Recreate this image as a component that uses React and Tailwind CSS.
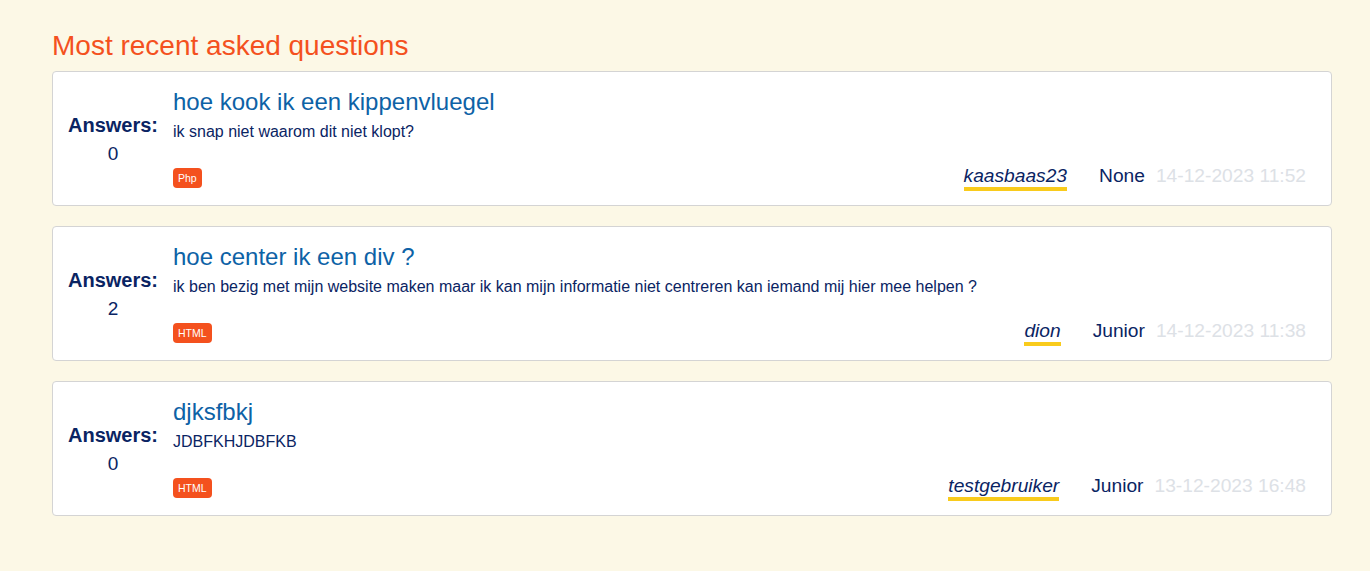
import React from 'react';

const questions = [
  {
    answers: 0,
    title: 'hoe kook ik een kippenvluegel',
    body: 'ik snap niet waarom dit niet klopt?',
    tag: 'Php',
    user: 'kaasbaas23',
    rank: 'None',
    date: '14-12-2023 11:52',
  },
  {
    answers: 2,
    title: 'hoe center ik een div ?',
    body: 'ik ben bezig met mijn website maken maar ik kan mijn informatie niet centreren kan iemand mij hier mee helpen ?',
    tag: 'HTML',
    user: 'dion',
    rank: 'Junior',
    date: '14-12-2023 11:38',
  },
  {
    answers: 0,
    title: 'djksfbkj',
    body: 'JDBFKHJDBFKB',
    tag: 'HTML',
    user: 'testgebruiker',
    rank: 'Junior',
    date: '13-12-2023 16:48',
  },
];

const QuestionCard = ({ q }) => (
  <div className="flex bg-white border border-[#d4d4d4] rounded-[4px] pl-2 pr-[26px] pt-4 pb-[14px]">
    <div className="w-[104px] flex flex-col items-center justify-center text-[#0a2463]">
      <span className="text-[20px] font-bold leading-[24px]">Answers:</span>
      <span className="text-[19px] leading-[24px] mt-[5px]">{q.answers}</span>
    </div>
    <div className="flex-1 ml-2 flex flex-col">
      <h2 className="text-[24px] leading-[28px] text-[#0d62a6]">{q.title}</h2>
      <p className="text-[16px] leading-[18px] mt-[7px] text-[#0a2463]">{q.body}</p>
      <div className="flex items-center justify-between mt-6">
        <span className="bg-[#f4511e] text-white text-[10.5px] leading-[20px] px-[5px] rounded-[4px]">{q.tag}</span>
        <div className="flex items-start text-[19.2px] mr-[-1px]">
          <span className="italic text-[#0a2463] border-b-4 border-[#f9cb1c] leading-[22px]">{q.user}</span>
          <span className="text-[#0a2463] ml-[32px] leading-[22px]">{q.rank}</span>
          <span className="text-[#dde1e6] ml-[11px] leading-[22px]">{q.date}</span>
        </div>
      </div>
    </div>
  </div>
);

export default function App() {
  return (
    <div className="min-h-screen bg-[#fcf8e6] px-[52px] pt-[30px] pb-10" style={{ fontFamily: '"Liberation Sans", Arial, sans-serif' }}>
      <div className="w-[1280px]">
        <h1 className="text-[28px] leading-[32px] text-[#f4511e] mb-[9px]">Most recent asked questions</h1>
        <div className="flex flex-col gap-5">
          {questions.map((q, i) => (
            <QuestionCard key={i} q={q} />
          ))}
        </div>
      </div>
    </div>
  );
}
